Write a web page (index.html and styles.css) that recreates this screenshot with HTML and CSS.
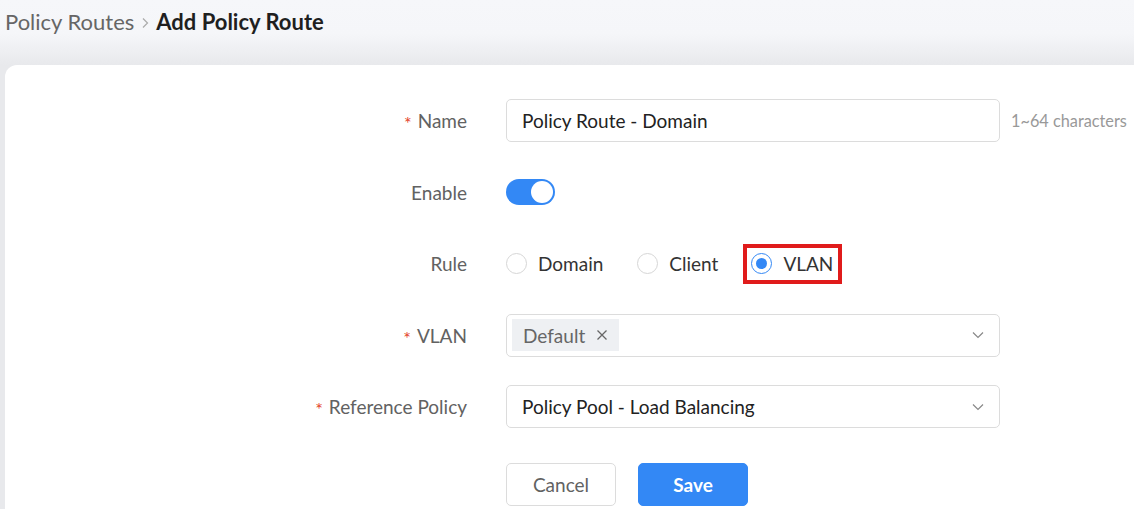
FILE: index.html
```html
<!DOCTYPE html>
<html lang="en">
<head>
  <meta charset="UTF-8" />
  <meta name="viewport" content="width=device-width, initial-scale=1.0"/>
  <title>Add Policy Route</title>
  <link rel="stylesheet" href="styles.css">
</head>
<body>
  <div class="page-head">
    <div class="breadcrumb">
      <span class="crumb">Policy Routes</span>
      <svg class="crumb-sep" viewBox="0 0 8 12" width="8" height="12"><path d="M2 1.5 L6.5 6 L2 10.5" fill="none" stroke="#aaa" stroke-width="1.2"/></svg>
      <span class="crumb-current">Add Policy Route</span>
    </div>
  </div>

  <div class="card">
    <form class="form">
      <div class="row">
        <label class="label"><span class="req">*</span>Name</label>
        <div class="field">
          <input class="input" type="text" value="Policy Route - Domain">
          <span class="hint">1~64 characters</span>
        </div>
      </div>

      <div class="row">
        <label class="label">Enable</label>
        <div class="field">
          <span class="switch on"><span class="knob"></span></span>
        </div>
      </div>

      <div class="row">
        <label class="label">Rule</label>
        <div class="field radios">
          <span class="radio"><span class="dot"></span>Domain</span>
          <span class="radio"><span class="dot"></span>Client</span>
          <span class="radio checked highlight"><span class="dot"></span>VLAN</span>
        </div>
      </div>

      <div class="row">
        <label class="label"><span class="req">*</span>VLAN</label>
        <div class="field">
          <div class="select multi">
            <span class="tag">Default
              <svg viewBox="0 0 12 12" width="12" height="12"><path d="M1.5 1.5 L10.5 10.5 M10.5 1.5 L1.5 10.5" stroke="#666" stroke-width="1.3"/></svg>
            </span>
            <svg class="chevron" viewBox="0 0 12 8" width="12" height="8"><path d="M1 1.5 L6 6.5 L11 1.5" fill="none" stroke="#888" stroke-width="1.2"/></svg>
          </div>
        </div>
      </div>

      <div class="row">
        <label class="label"><span class="req">*</span>Reference Policy</label>
        <div class="field">
          <div class="select">
            <span class="value">Policy Pool - Load Balancing</span>
            <svg class="chevron" viewBox="0 0 12 8" width="12" height="8"><path d="M1 1.5 L6 6.5 L11 1.5" fill="none" stroke="#888" stroke-width="1.2"/></svg>
          </div>
        </div>
      </div>

      <div class="row actions">
        <span class="label"></span>
        <div class="field">
          <button type="button" class="btn">Cancel</button>
          <button type="button" class="btn primary">Save</button>
        </div>
      </div>
    </form>
  </div>
</body>
</html>
```

FILE: styles.css
```css
* { box-sizing: border-box; }
body {
  margin: 0;
  font-family: Lato, "Open Sans", sans-serif;
  background: linear-gradient(to bottom, #f6f7fa 0, #f5f6f9 34px, #e8e9ec 65px, #e8e9ec 100%);
  color: #222;
  overflow: hidden;
}
.page-head {
  height: 65px;
  padding: 8px 0 0 5px;
}
.breadcrumb {
  display: flex;
  align-items: center;
  font-size: 22px;
}
.crumb {
  color: #666;
}
.crumb-sep {
  margin: 2px 7px 0 7px;
}
.crumb-current {
  font-weight: bold;
  color: #1f1f1f;
}
.card {
  background: white;
  margin-left: 5px;
  border-radius: 12px 0 0 0;
  height: 460px;
  padding-top: 34px;
}
.form {
  display: flex;
  flex-direction: column;
  gap: 28.6px;
}
.row {
  display: flex;
  align-items: center;
  height: 43px;
}
.label {
  flex: none;
  width: 501px;
  text-align: right;
  padding-right: 39px;
  font-size: 19px;
  color: #626262;
}
.req {
  color: #e4432b;
  font-size: 18px;
  margin-right: 6px;
  position: relative;
  top: 2px;
}
.field {
  display: flex;
  align-items: center;
}
.input,
.select {
  width: 494px;
  height: 43px;
  border: 1px solid #dcdcdc;
  border-radius: 5px;
  font-family: inherit;
  font-size: 19px;
  color: #222;
  padding: 0 15px;
  background: white;
}
.hint {
  margin-left: 11px;
  font-size: 16.3px;
  color: #999;
}
.switch {
  width: 49px;
  height: 26px;
  border-radius: 13px;
  background: #3388f5;
  display: flex;
  align-items: center;
  justify-content: flex-end;
  padding: 2px;
}
.knob {
  width: 22px;
  height: 22px;
  border-radius: 50%;
  background: white;
}
.radio {
  display: flex;
  align-items: center;
  font-size: 19px;
  color: #333;
  margin-right: 34px;
}
.radio .dot {
  width: 21px;
  height: 21px;
  border-radius: 50%;
  border: 1px solid #d6d6d6;
  margin-right: 11px;
  display: flex;
  align-items: center;
  justify-content: center;
}
.radio.checked .dot {
  border-color: #3388f5;
}
.radio.checked .dot::after {
  content: "";
  width: 11px;
  height: 11px;
  border-radius: 50%;
  background: #3388f5;
}
.highlight {
  border: 4px solid #e01b1b;
  height: 40px;
  padding: 0 5px 0 4px;
  margin-left: -9px;
}
.select {
  display: flex;
  align-items: center;
  justify-content: space-between;
}
.select.multi {
  padding-left: 5px;
}
.tag {
  display: flex;
  align-items: center;
  gap: 11px;
  background: #eef0f3;
  color: #666;
  height: 32px;
  padding: 0 11px;
  font-size: 19px;
}
.chevron {
  margin-right: 0;
}
.actions {
  margin-top: 6px;
}
.btn {
  width: 110px;
  height: 43px;
  border: 1px solid #dcdcdc;
  border-radius: 5px;
  background: white;
  font-family: inherit;
  font-size: 19px;
  color: #626262;
  margin-right: 22px;
}
.btn.primary {
  background: #3388f5;
  border-color: #3388f5;
  color: white;
  font-weight: bold;
}
```
